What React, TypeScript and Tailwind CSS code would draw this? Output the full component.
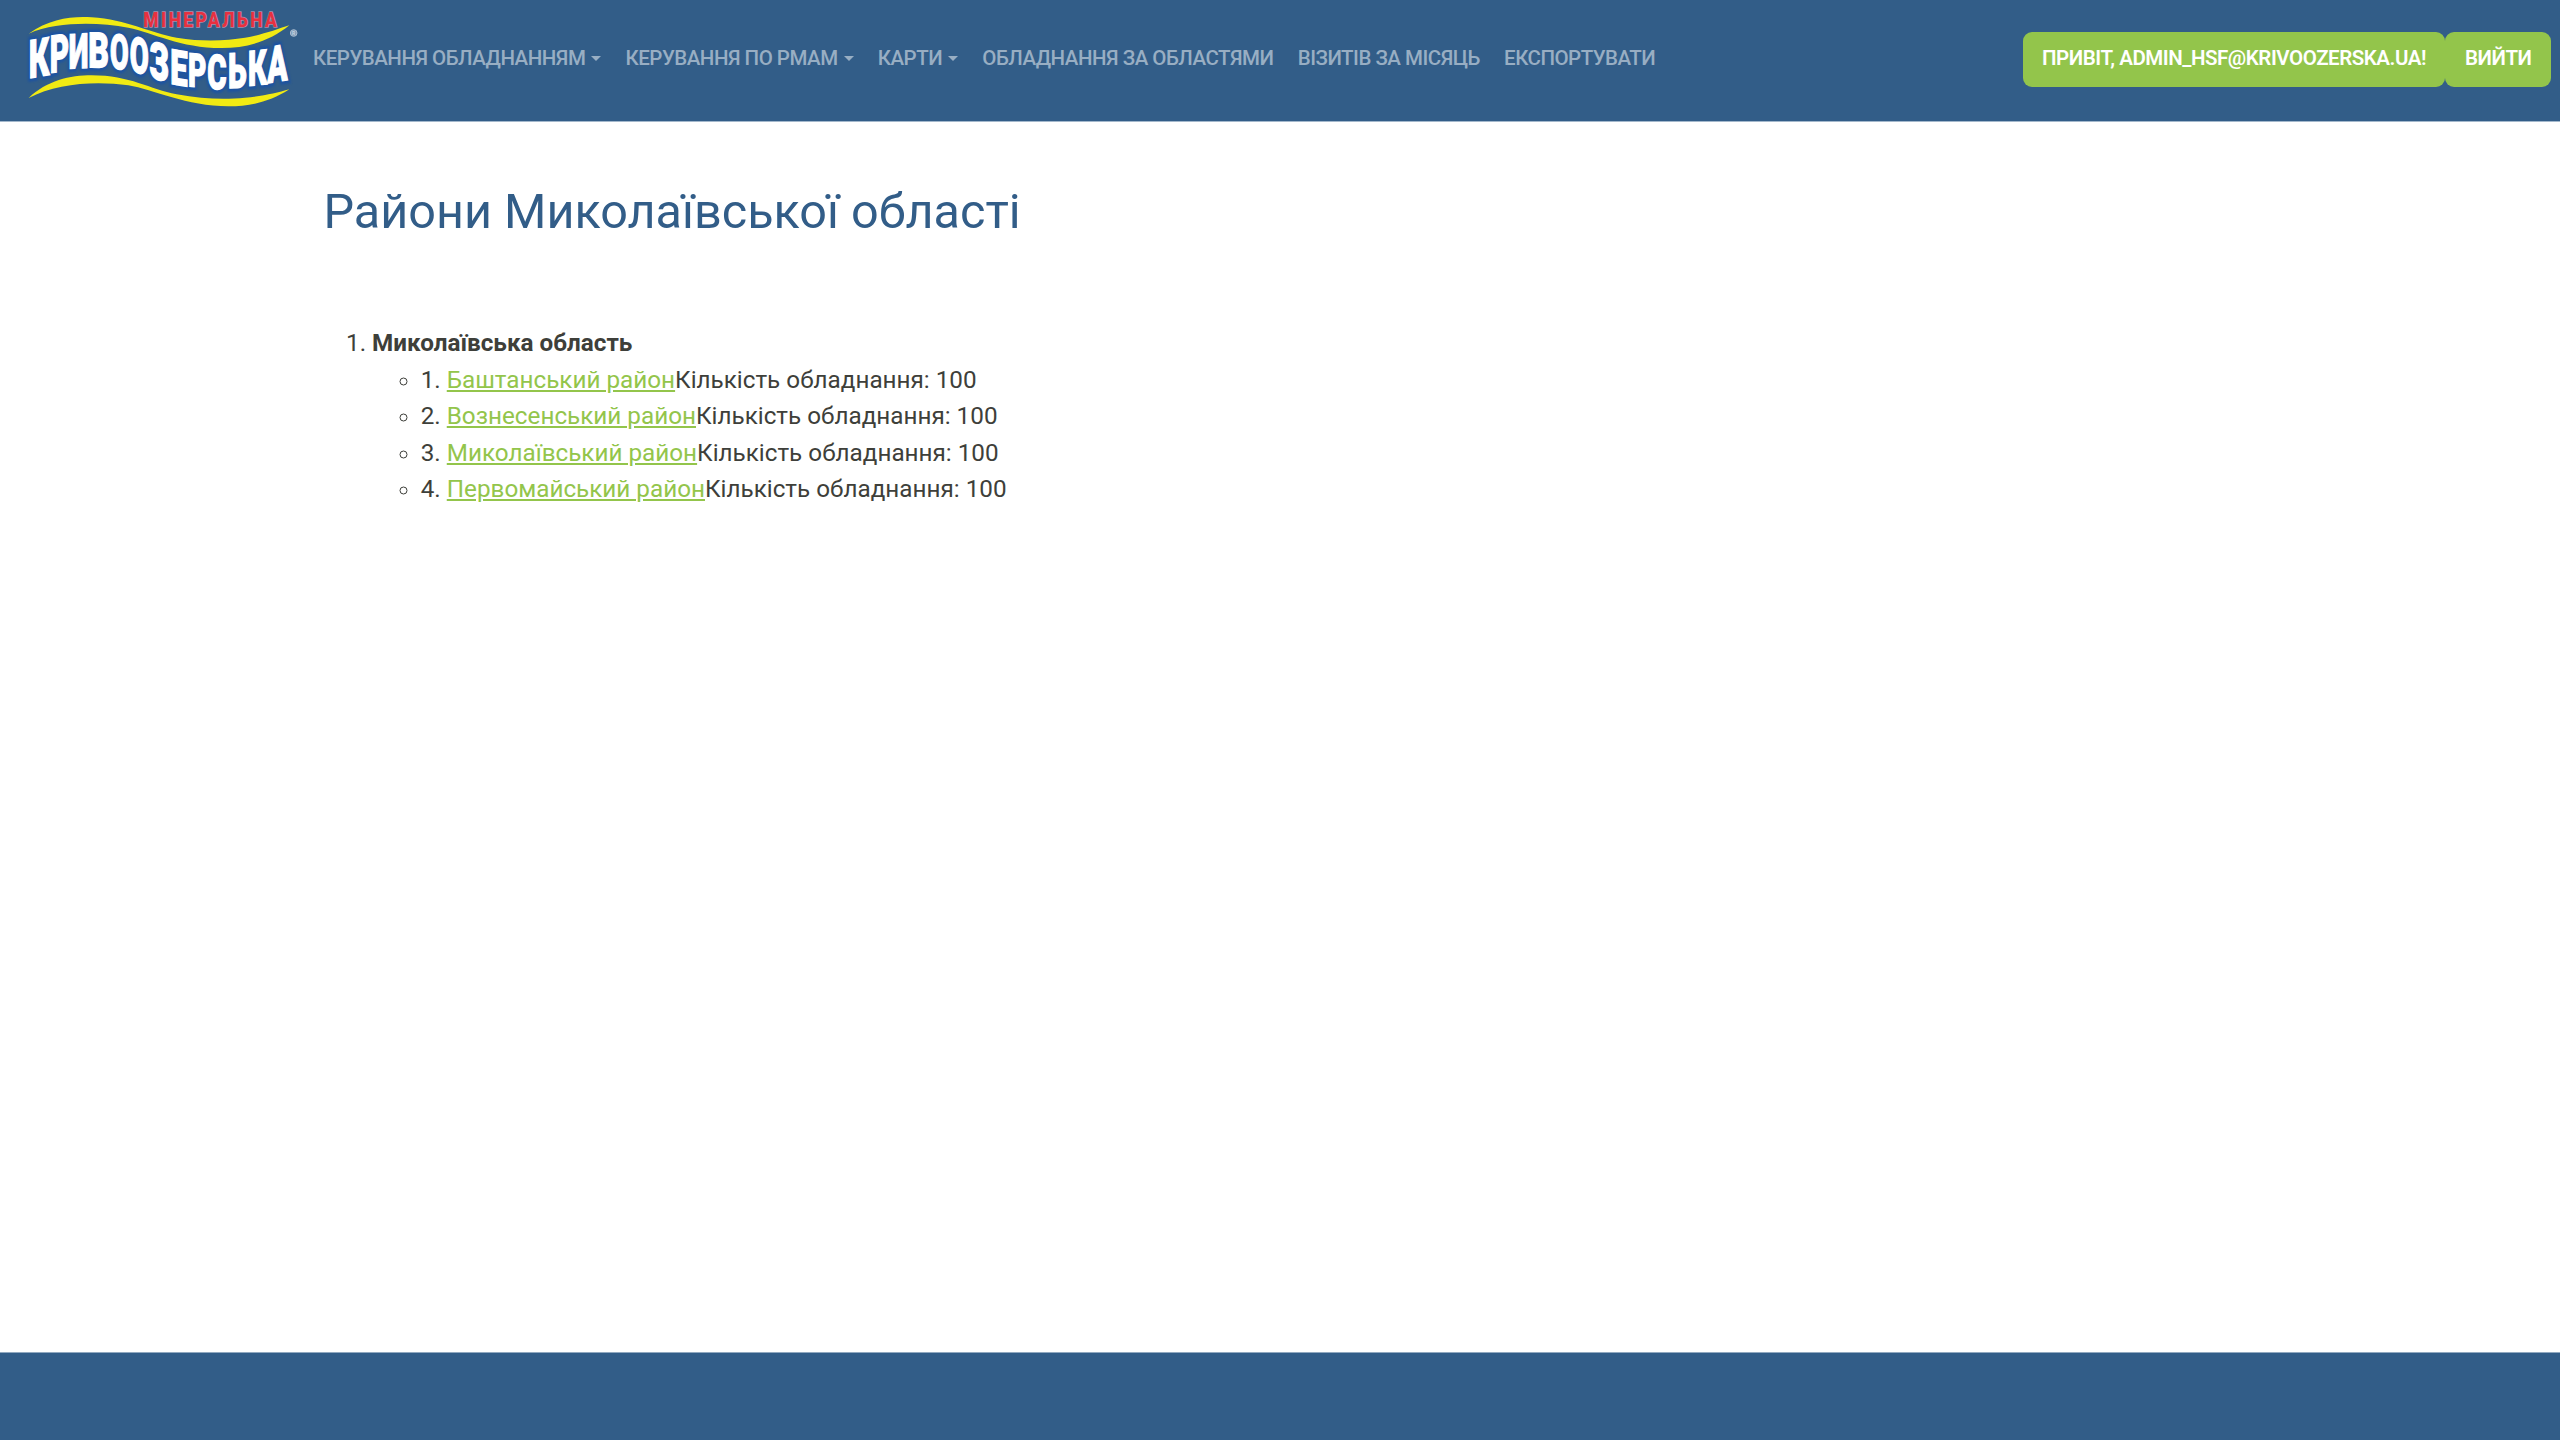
const letters = [
  { c: 'К', x: 86, y: 235, w: 62, h: 113, k: -0.17 },
  { c: 'Р', x: 149, y: 219, w: 58, h: 111, k: -0.13 },
  { c: 'И', x: 206, y: 206, w: 59, h: 103, k: -0.05 },
  { c: 'В', x: 265, y: 202, w: 62, h: 104, k: 0.02 },
  { c: 'О', x: 330, y: 205, w: 56, h: 104, k: 0.1 },
  { c: 'О', x: 389, y: 214, w: 57, h: 106, k: 0.2 },
  { c: 'З', x: 448, y: 232, w: 60, h: 110, k: 0.26 },
  { c: 'Е', x: 511, y: 251, w: 52, h: 104, k: 0.16 },
  { c: 'Р', x: 564, y: 259, w: 55, h: 100, k: 0.1 },
  { c: 'С', x: 622, y: 267, w: 58, h: 103, k: 0.02 },
  { c: 'Ь', x: 684, y: 265, w: 56, h: 104, k: -0.05 },
  { c: 'К', x: 744, y: 258, w: 57, h: 104, k: -0.1 },
  { c: 'А', x: 802, y: 250, w: 61, h: 108, k: -0.16 },
];

function Word({ className, strokeWidth }: { className: string; strokeWidth: number }) {
  return (
    <g className={className} strokeWidth={strokeWidth}>
      {letters.map((l, i) => (
        <text
          key={i}
          fontFamily="Roboto, sans-serif"
          fontWeight="900"
          fontSize={l.h / 0.711}
          textLength={l.w}
          lengthAdjust="spacingAndGlyphs"
          transform={`matrix(1 ${l.k} 0 1 ${l.x} ${l.y})`}
        >
          {l.c}
        </text>
      ))}
    </g>
  );
}

function Logo() {
  return (
    <svg viewBox="0 0 960 363" className="-mr-[7px] h-[121px] w-[320px] shrink-0" preserveAspectRatio="none">
      <Word className="fill-[#1d53a0] stroke-[#1d53a0] blur-[3px]" strokeWidth={22} />
      <Word className="fill-white stroke-white" strokeWidth={4} />
      <path
        className="fill-[#f1ea13]"
        d="M86 101C150 55 220 48 275 52C380 58 450 100 530 113C610 126 680 122 735 113C790 104 830 88 868 76C810 124 740 144 665 144C540 144 460 98 385 83C290 66 170 65 86 101Z"
      />
      <path
        className="fill-[#f1ea13]"
        d="M86 294C140 242 210 226 275 226C390 226 450 268 530 283C610 298 680 299 735 293C790 288 830 279 868 268C810 306 750 319 685 319C560 319 460 268 385 256C290 242 170 249 86 294Z"
      />
      <text
        transform="matrix(0.9 0 0 1 430 82)"
        textLength="445"
        lengthAdjust="spacing"
        fontFamily="Roboto, sans-serif"
        fontWeight="800"
        fontSize="58"
        className="fill-[#e8303f] stroke-[#a58fac] [paint-order:stroke]"
        strokeWidth="4"
      >
        МІНЕРАЛЬНА
      </text>
      <circle cx="881" cy="99" r="10" className="fill-[#7f9cba] stroke-[#a9bccf]" strokeWidth="3" />
      <text x="876" y="105" fontFamily="Roboto, sans-serif" fontWeight="700" fontSize="15" className="fill-[#c5d2df]">
        R
      </text>
    </svg>
  );
}

const nav = [
  { label: 'Керування обладнанням', menu: true },
  { label: 'Керування по РМАМ', menu: true },
  { label: 'Карти', menu: true },
  { label: 'Обладнання за областями', menu: false },
  { label: 'Візитів за місяць', menu: false },
  { label: 'Експортувати', menu: false },
];

const districts = ['Баштанський район', 'Вознесенський район', 'Миколаївський район', 'Первомайський район'];

export default function App() {
  return (
    <div className="flex h-[1440px] w-full flex-col bg-white font-[Roboto,sans-serif] text-[24.25px] leading-[36.45px] text-[#3e3f3a]">
      <header className="flex h-[122px] shrink-0 items-start border-b border-[#a3b8cc] bg-[#325d88] pr-[9px] text-[20.5px] leading-[33.4px] font-medium uppercase">
        <Logo />
        <nav className="mt-[42px] flex grow gap-[24.2px] tracking-[-0.5px] text-[#98aec3]">
          {nav.map((n) => (
            <a key={n.label} className="flex items-center whitespace-nowrap">
              {n.label}
              {n.menu && (
                <span className="ml-[6px] border-x-[5px] border-t-[5.5px] border-x-transparent border-t-[#98aec3]" />
              )}
            </a>
          ))}
        </nav>
        <div className="mt-[32px] flex font-semibold tracking-[-0.46px] text-white">
          <a className="h-[54.6px] rounded-[9px] bg-[#93c54b] px-[19.5px] pt-[10px] whitespace-nowrap">
            Привіт, admin_hsf@krivoozerska.ua!
          </a>
          <a className="h-[54.6px] rounded-[9px] bg-[#93c54b] px-[19.5px] pt-[10px] whitespace-nowrap">Вийти</a>
        </div>
      </header>
      <main className="grow pl-[323.5px]">
        <h1 className="mt-[60.5px] text-[48.55px] leading-[58.3px] font-normal text-[#325d88]">
          Райони Миколаївської області
        </h1>
        <ol className="mt-[84.6px] list-decimal pl-[48.6px]">
          <li>
            <b className="font-bold">Миколаївська область</b>
            <ul className="list-[circle] pl-[48.6px]">
              {districts.map((d, i) => (
                <li key={d}>
                  {i + 1}.{' '}
                  <a className="text-[#93c54b] underline">{d}</a>
                  Кількість обладнання: 100
                </li>
              ))}
            </ul>
          </li>
        </ol>
      </main>
      <footer className="h-[88px] shrink-0 border-t border-[#91a9c0] bg-[#325d88]" />
    </div>
  );
}
